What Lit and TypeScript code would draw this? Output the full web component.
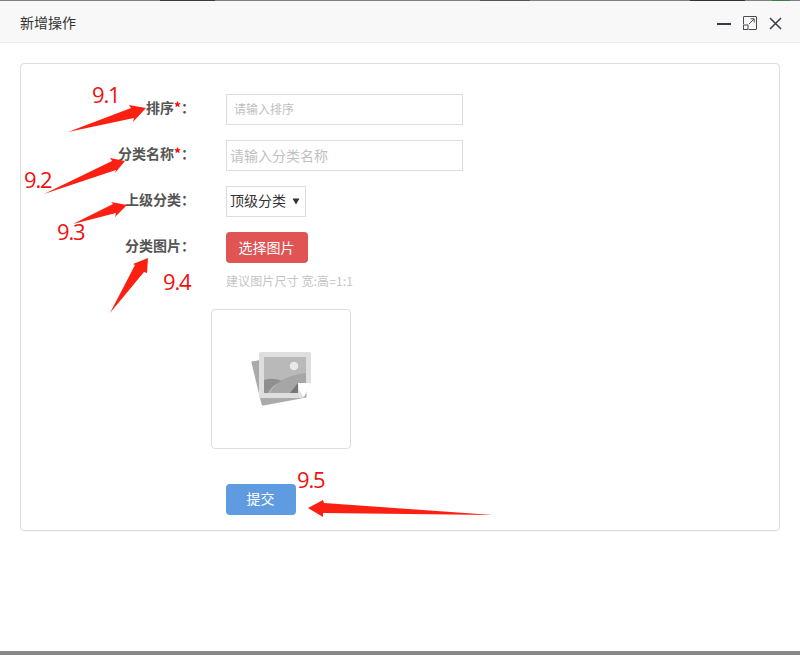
import { LitElement, html, css, svg } from "lit";
import { customElement } from "lit/decorators.js";

const ARROWS = [
  "68,132 131,108 129,105 146,108 133,122 134,118",
  "44,194 112,161 110,158 125,161 115,173 116,170",
  "73,224 113,204 111,202 127,205 115,217 116,213",
  "110,313 135,265 133,264 148,258 147,273 144,272",
  "493,515 324,503 323,500 308,508 323,517 323,513",
];
const NUMS = [
  { t: "9.1", x: 92, y: 82 },
  { t: "9.2", x: 24, y: 167 },
  { t: "9.3", x: 57, y: 219 },
  { t: "9.4", x: 163, y: 269 },
  { t: "9.5", x: 297, y: 467 },
];

@customElement("app-root")
export class AppRoot extends LitElement {
  static styles = css`
    :host {
      display: flex;
      flex-direction: column;
      position: relative;
      width: 800px;
      height: 655px;
      overflow: hidden;
      background: #fff;
      font-family: "Noto Sans CJK SC", "Liberation Sans", sans-serif;
    }
    .topline {
      height: 1px;
      flex: none;
      background: linear-gradient(90deg,
        #808080 0 160px, #3a3a3a 160px 215px, #808080 215px 480px,
        #555 480px 530px, #808080 530px 690px, #333 690px 745px,
        #808080 745px 772px, #3f7f3f 772px 790px, #808080 790px);
    }
    .header {
      flex: none;
      height: 42px;
      box-sizing: border-box;
      background: #f8f8f8;
      border-bottom: 1px solid #eee;
      display: flex;
      align-items: center;
      justify-content: space-between;
      padding: 0 18px 0 20px;
      font-size: 14px;
      color: #333;
    }
    .win { display: flex; align-items: center; gap: 12px; margin-top: 3px; }
    .win svg { display: block; }
    .body { flex: 1; padding: 20px 20px 0; }
    .card {
      box-sizing: border-box;
      height: 468px;
      border: 1px solid #ddd;
      border-radius: 4px;
      padding-top: 30px;
      box-shadow: 0 1px 1px rgba(0,0,0,.03);
    }
    .row { display: flex; align-items: center; height: 31px; margin-bottom: 15px; }
    .label {
      width: 174px;
      margin-right: 31px;
      text-align: right;
      font-size: 14px;
      font-weight: 700;
      color: #555;
      line-height: 26px;
      align-self: flex-start;
    }
    .star { color: #f00; }
    input {
      box-sizing: border-box;
      width: 237px;
      height: 31px;
      border: 1px solid #ddd;
      outline: none;
      background: #fff;
      font-family: inherit;
      margin: 0;
    }
    input::placeholder { color: #c0c0c0; opacity: 1; }
    .small { font-size: 12px; padding: 0 7px 2px; }
    .big { font-size: 14px; padding: 0 3px 2px; }
    .select {
      box-sizing: border-box;
      width: 80px;
      height: 31px;
      border: 1px solid #ddd;
      display: flex;
      align-items: center;
      justify-content: space-between;
      padding: 0 5px 3px 3px;
      font-size: 14px;
      color: #333;
    }
    .select svg { margin-top: 3px; }
    .pick {
      box-sizing: border-box;
      width: 82px;
      height: 31px;
      border: none;
      border-radius: 4px;
      background: #e05454;
      color: #fff;
      font-family: inherit;
      font-size: 14px;
      padding: 0 1px 2px 0;
    }
    .hint {
      margin: -6px 0 0 205px;
      height: 18px;
      line-height: 18px;
      font-size: 12px;
      letter-spacing: .12px;
      color: #c4c4c4;
    }
    .thumb {
      box-sizing: border-box;
      width: 140px;
      height: 140px;
      margin: 19px 0 0 190px;
      border: 1px solid #ddd;
      border-radius: 4px;
      display: flex;
      align-items: center;
      justify-content: center;
    }
    .submit {
      display: block;
      width: 70px;
      height: 31px;
      margin: 35px 0 0 205px;
      border: none;
      border-radius: 4px;
      background: #5f9be0;
      color: #fff;
      font-family: inherit;
      font-size: 14px;
      padding: 0 1px 3px 0;
    }
    .bottomline { flex: none; height: 4px; background: #888; }
    .marks { position: absolute; left: 0; top: 0; pointer-events: none; }
    .num {
      position: absolute;
      font-family: "Open Sans", "Liberation Sans", sans-serif;
      font-size: 22px;
      line-height: 24px;
      letter-spacing: -1.2px;
      color: #f01010;
    }
  `;

  render() {
    return html`
      <div class="topline"></div>
      <div class="header">
        <span>新增操作</span>
        <div class="win">
          <svg width="14" height="15" viewBox="0 0 14 15"><path d="M0 8h14" stroke="#3a3a44" stroke-width="2" /></svg>
          <svg width="14" height="14" viewBox="0 0 14 14" fill="none" stroke="#4a4a55" stroke-width="1">
            <path d="M.5 8V1q0-.5 .5-.5h12q.5 0 .5 .5v12q0 .5-.5 .5H6" />
            <rect x=".5" y="9" width="4.500" height="4.500" />
            <path d="M6 8L11 3M7.500 2.800h3.700V6.500" />
          </svg>
          <svg width="13" height="13" viewBox="0 0 13 13" fill="none" stroke="#3a3a44" stroke-width="1.500"><path d="M1 1l11 11M12 1L1 12" /></svg>
        </div>
      </div>
      <div class="body">
        <div class="card">
          <div class="row">
            <div class="label">排序<span class="star">*</span>：</div>
            <input class="small" placeholder="请输入排序" />
          </div>
          <div class="row">
            <div class="label">分类名称<span class="star">*</span>：</div>
            <input class="big" placeholder="请输入分类名称" />
          </div>
          <div class="row">
            <div class="label">上级分类：</div>
            <div class="select">
              <span>顶级分类</span>
              <svg width="8" height="7" viewBox="0 0 8 7"><path d="M.5 .5h7L4 6.500z" fill="#333" /></svg>
            </div>
          </div>
          <div class="row">
            <div class="label">分类图片：</div>
            <button class="pick">选择图片</button>
          </div>
          <div class="hint">建议图片尺寸 宽:高=1:1</div>
          <div class="thumb">
            <svg width="62" height="58" viewBox="250 350 62 58">
              <path d="M252.500 361.500l7-1.500h47v37.500l-43 8q-1.500 .3-2-1.500l-10-41q-.3-1.500 .5-2z" fill="#aaa" />
              <path d="M261 352h48q2 0 2 2v29l-8 15h-44v-44q0-2 2-2z" fill="#dedede" />
              <rect x="264" y="357" width="42" height="36" fill="#b9b9b9" />
              <circle cx="294" cy="366" r="4.300" fill="#e8e8e8" />
              <path d="M270 393q8-17 36-20v20z" fill="#a6a6a6" />
              <path d="M264 380q9-3 18 1-10 4-14 12h-4z" fill="#8f8f8f" />
              <path d="M290 393l8-10v10z" fill="#777" />
              <path d="M298 383h13l-7 14-6-3z" fill="#fff" />
              <path d="M298 383l1 7 5 7-6-3z" fill="#e2e2e2" />
            </svg>
          </div>
          <button class="submit">提交</button>
        </div>
      </div>
      <div class="bottomline"></div>
      <svg class="marks" width="800" height="655">
        ${ARROWS.map((p) => svg`<polygon points=${p} fill="#fb2012" />`)}
      </svg>
      ${NUMS.map((n) => html`<div class="num" style="left:${n.x}px;top:${n.y}px">${n.t}</div>`)}
    `;
  }
}
